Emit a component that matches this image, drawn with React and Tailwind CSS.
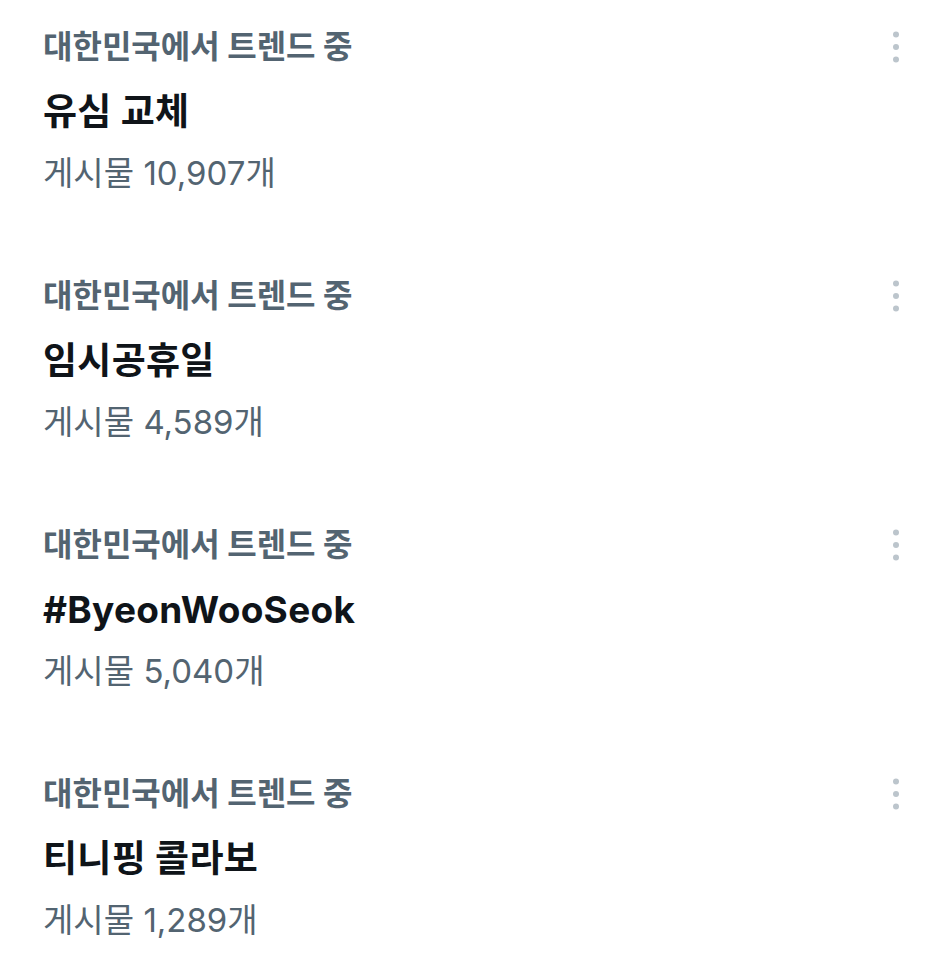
import React from 'react';

const trends = [
  { title: '유심 교체', count: '10,907' },
  { title: '임시공휴일', count: '4,589' },
  { title: '#ByeonWooSeok', count: '5,040' },
  { title: '티니핑 콜라보', count: '1,289' },
];

const MoreDots = () => (
  <svg width="24" height="40" viewBox="0 0 24 40" className="shrink-0">
    <circle cx="12" cy="7.5" r="3" fill="#bcc5cc" />
    <circle cx="12" cy="20" r="3" fill="#bcc5cc" />
    <circle cx="12" cy="32.5" r="3" fill="#bcc5cc" />
  </svg>
);

const TrendItem = ({ title, count }) => (
  <div>
    <div className="flex h-[40px] items-center justify-between pr-[41px]">
      <p className="text-[32px] font-bold leading-[40px] text-[#536471]">대한민국에서 트렌드 중</p>
      <MoreDots />
    </div>
    <p className="mt-[20px] text-[37px] font-bold leading-[50px] tracking-[0.3px] text-[#0f1419]">{title}</p>
    <p className="mt-[16px] text-[33px] leading-[40px] text-[#536471]">게시물 {count}개</p>
  </div>
);

const App = () => {
  return (
    <div
      className="flex min-h-screen w-full flex-col gap-[83px] bg-white pl-[43px] pt-[27px]"
      style={{ fontFamily: 'Inter, "Noto Sans CJK KR", sans-serif' }}
    >
      {trends.map((trend) => (
        <TrendItem key={trend.title} title={trend.title} count={trend.count} />
      ))}
    </div>
  );
};

export default App;
